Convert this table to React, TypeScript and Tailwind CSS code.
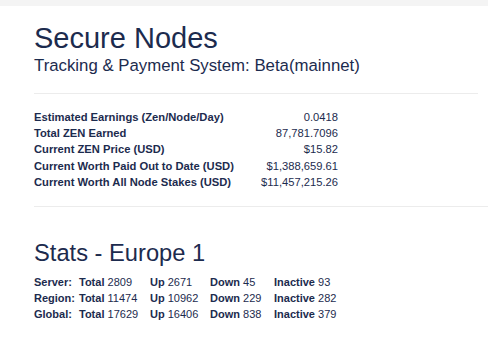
import React from 'react';

const EARNINGS = [
  { label: 'Estimated Earnings (Zen/Node/Day)', value: '0.0418' },
  { label: 'Total ZEN Earned', value: '87,781.7096' },
  { label: 'Current ZEN Price (USD)', value: '$15.82' },
  { label: 'Current Worth Paid Out to Date (USD)', value: '$1,388,659.61' },
  { label: 'Current Worth All Node Stakes (USD)', value: '$11,457,215.26' },
];

const STATS = [
  { scope: 'Server:', total: 2809, up: 2671, down: 45, inactive: 93 },
  { scope: 'Region:', total: 11474, up: 10962, down: 229, inactive: 282 },
  { scope: 'Global:', total: 17629, up: 16406, down: 838, inactive: 379 },
];

const App: React.FC = () => {
  return (
    <div className="min-h-screen bg-white text-[#1c2b4e] font-['Liberation_Sans',Arial,sans-serif]">
      <div className="h-[6px] bg-[#f4f4f4]" />

      <div className="pl-[34px]">
        {/* Header */}
        <div className="pr-[10px]">
          <h1 className="mt-[16px] text-[29px] leading-[32px] font-normal">Secure Nodes</h1>
          <p className="mt-[2px] text-[16.8px] leading-[20px]">Tracking &amp; Payment System: Beta(mainnet)</p>
          <hr className="mt-[17px] border-t border-[#ececec]" />
        </div>

        {/* Earnings */}
        <div className="mt-[15px] w-[304px] text-[11.2px]">
          {EARNINGS.map((row) => (
            <div key={row.label} className="flex justify-between leading-[16.2px]">
              <span className="font-bold">{row.label}</span>
              <span>{row.value}</span>
            </div>
          ))}
        </div>

        <hr className="mt-[16px] border-t border-[#ececec]" />

        {/* Stats */}
        <h2 className="mt-[32px] text-[23.7px] leading-[28px] font-normal">Stats - Europe 1</h2>
        <div className="mt-[7px] text-[11px]">
          {STATS.map((s) => (
            <div key={s.scope} className="flex leading-[16px]">
              <span className="w-[45px] font-bold">{s.scope}</span>
              <span className="w-[71px]"><b>Total</b> {s.total}</span>
              <span className="w-[60px]"><b>Up</b> {s.up}</span>
              <span className="w-[64px]"><b>Down</b> {s.down}</span>
              <span><b>Inactive</b> {s.inactive}</span>
            </div>
          ))}
        </div>
      </div>
    </div>
  );
};

export default App;
